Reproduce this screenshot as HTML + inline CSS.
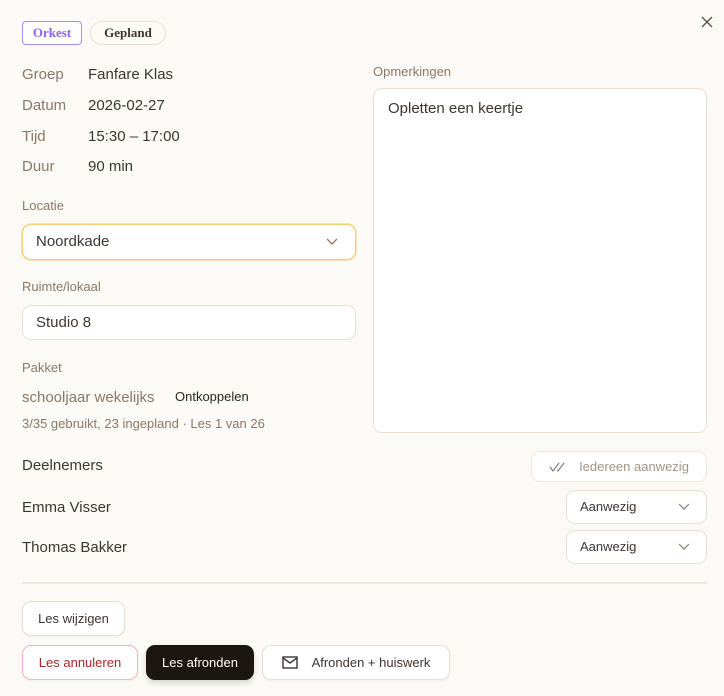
<!DOCTYPE html>
<html><head><meta charset="utf-8"><style>
*{box-sizing:border-box;margin:0;padding:0}
body{width:724px;height:696px;background:#fcfaf6;font-family:"Liberation Sans",sans-serif;color:#3d3530;position:relative;overflow:hidden}
.a{position:absolute;white-space:nowrap}
.lbl{color:#8a7868;font-size:15px}
.val{font-size:15px;color:#3d3530}
.small{font-size:13px;color:#8a7868}
.box{position:absolute;background:#fff;border:1px solid #eadfd2;border-radius:9px}
.btn{position:absolute;background:#fff;border:1px solid #eadfd2;border-radius:9px;font-size:13px;display:flex;align-items:center;justify-content:center;box-shadow:0 1px 2px rgba(0,0,0,.05)}
</style></head><body>
<div class="a" style="left:22px;top:21px;width:60px;height:24px;border:1px solid #a58af5;border-radius:4px;color:#8b63f0;font-family:'Liberation Serif',serif;font-weight:bold;font-size:13px;display:flex;align-items:center;justify-content:center;background:#fff">Orkest</div>
<div class="a" style="left:90px;top:21px;width:76px;height:24px;border:1px solid #eadfd2;border-radius:12px;color:#3d3530;font-family:'Liberation Serif',serif;font-weight:bold;font-size:13px;display:flex;align-items:center;justify-content:center;background:#fdfbf7">Gepland</div>
<svg class="a" style="left:701px;top:16px" width="12" height="12"><path d="M1 1l10 10M11 1L1 11" stroke="#5a4f47" stroke-width="1.3"/></svg>

<div class="a lbl" style="left:22px;top:66px">Groep</div><div class="a val" style="left:88px;top:66px">Fanfare Klas</div>
<div class="a lbl" style="left:22px;top:97px">Datum</div><div class="a val" style="left:88px;top:97px">2026-02-27</div>
<div class="a lbl" style="left:22px;top:128px">Tijd</div><div class="a val" style="left:88px;top:128px">15:30 – 17:00</div>
<div class="a lbl" style="left:22px;top:158px">Duur</div><div class="a val" style="left:88px;top:158px">90 min</div>

<div class="a small" style="left:22px;top:198px">Locatie</div>
<div class="box" style="left:22px;top:224px;width:334px;height:36px;border:1px solid #f2cf78;box-shadow:0 0 0 1px #f7e3b0"></div>
<div class="a val" style="left:36px;top:233px">Noordkade</div>
<svg class="a" style="left:326px;top:237px" width="12" height="10"><path d="M1 2l5 5 5-5" stroke="#8a7868" fill="none" stroke-width="1.3"/></svg>

<div class="a small" style="left:22px;top:279px">Ruimte/lokaal</div>
<div class="box" style="left:22px;top:305px;width:334px;height:35px"></div>
<div class="a val" style="left:36px;top:314px">Studio 8</div>

<div class="a small" style="left:22px;top:360px">Pakket</div>
<div class="a lbl" style="left:22px;top:389px">schooljaar wekelijks</div>
<div class="a" style="left:175px;top:389px;font-size:13px;color:#2d2520">Ontkoppelen</div>
<div class="a small" style="left:22px;top:416px;font-size:13px">3/35 gebruikt, 23 ingepland · Les 1 van 26</div>

<div class="a small" style="left:373px;top:64px">Opmerkingen</div>
<div class="box" style="left:373px;top:88px;width:334px;height:345px"></div>
<div class="a val" style="left:388px;top:100px">Opletten een keertje</div>

<div class="a" style="left:22px;top:457px;font-size:15px">Deelnemers</div>
<div class="btn" style="left:531px;top:451px;width:176px;height:31px;color:#a39689;box-shadow:none;border-color:#f0e8de"><svg width="20" height="12" style="margin-right:10px"><path d="M1 6l3 4 6-8M8 9l1 1 6-8" stroke="#8a7e74" fill="none" stroke-width="1.2"/></svg>Iedereen aanwezig</div>

<div class="a" style="left:22px;top:499px;font-size:15px">Emma Visser</div>
<div class="box" style="left:566px;top:490px;width:141px;height:34px"></div>
<div class="a" style="left:580px;top:499px;font-size:13px">Aanwezig</div>
<svg class="a" style="left:678px;top:503px" width="12" height="8"><path d="M1 1l5 5 5-5" stroke="#8a7868" fill="none" stroke-width="1.2"/></svg>
<div class="a" style="left:22px;top:539px;font-size:15px">Thomas Bakker</div>
<div class="box" style="left:566px;top:530px;width:141px;height:34px"></div>
<div class="a" style="left:580px;top:539px;font-size:13px">Aanwezig</div>
<svg class="a" style="left:678px;top:543px" width="12" height="8"><path d="M1 1l5 5 5-5" stroke="#8a7868" fill="none" stroke-width="1.2"/></svg>

<div class="a" style="left:22px;top:582px;width:685px;height:2px;background:#efe6dc"></div>

<div class="btn" style="left:22px;top:601px;width:103px;height:35px">Les wijzigen</div>
<div class="btn" style="left:22px;top:645px;width:116px;height:35px;border-color:#f5b5b5;color:#a8262a">Les annuleren</div>
<div class="btn" style="left:146px;top:645px;width:108px;height:35px;background:#1c1612;border-color:#1c1612;color:#fff;box-shadow:0 3px 6px rgba(0,0,0,.15)">Les afronden</div>
<div class="btn" style="left:262px;top:645px;width:188px;height:35px"><svg width="16" height="13" style="margin-right:14px"><rect x="1" y="1" width="14" height="11" fill="none" stroke="#3d3530" stroke-width="1.4"/><path d="M1 2l7 5 7-5" fill="none" stroke="#3d3530" stroke-width="1.4"/></svg>Afronden + huiswerk</div>
</body></html>
